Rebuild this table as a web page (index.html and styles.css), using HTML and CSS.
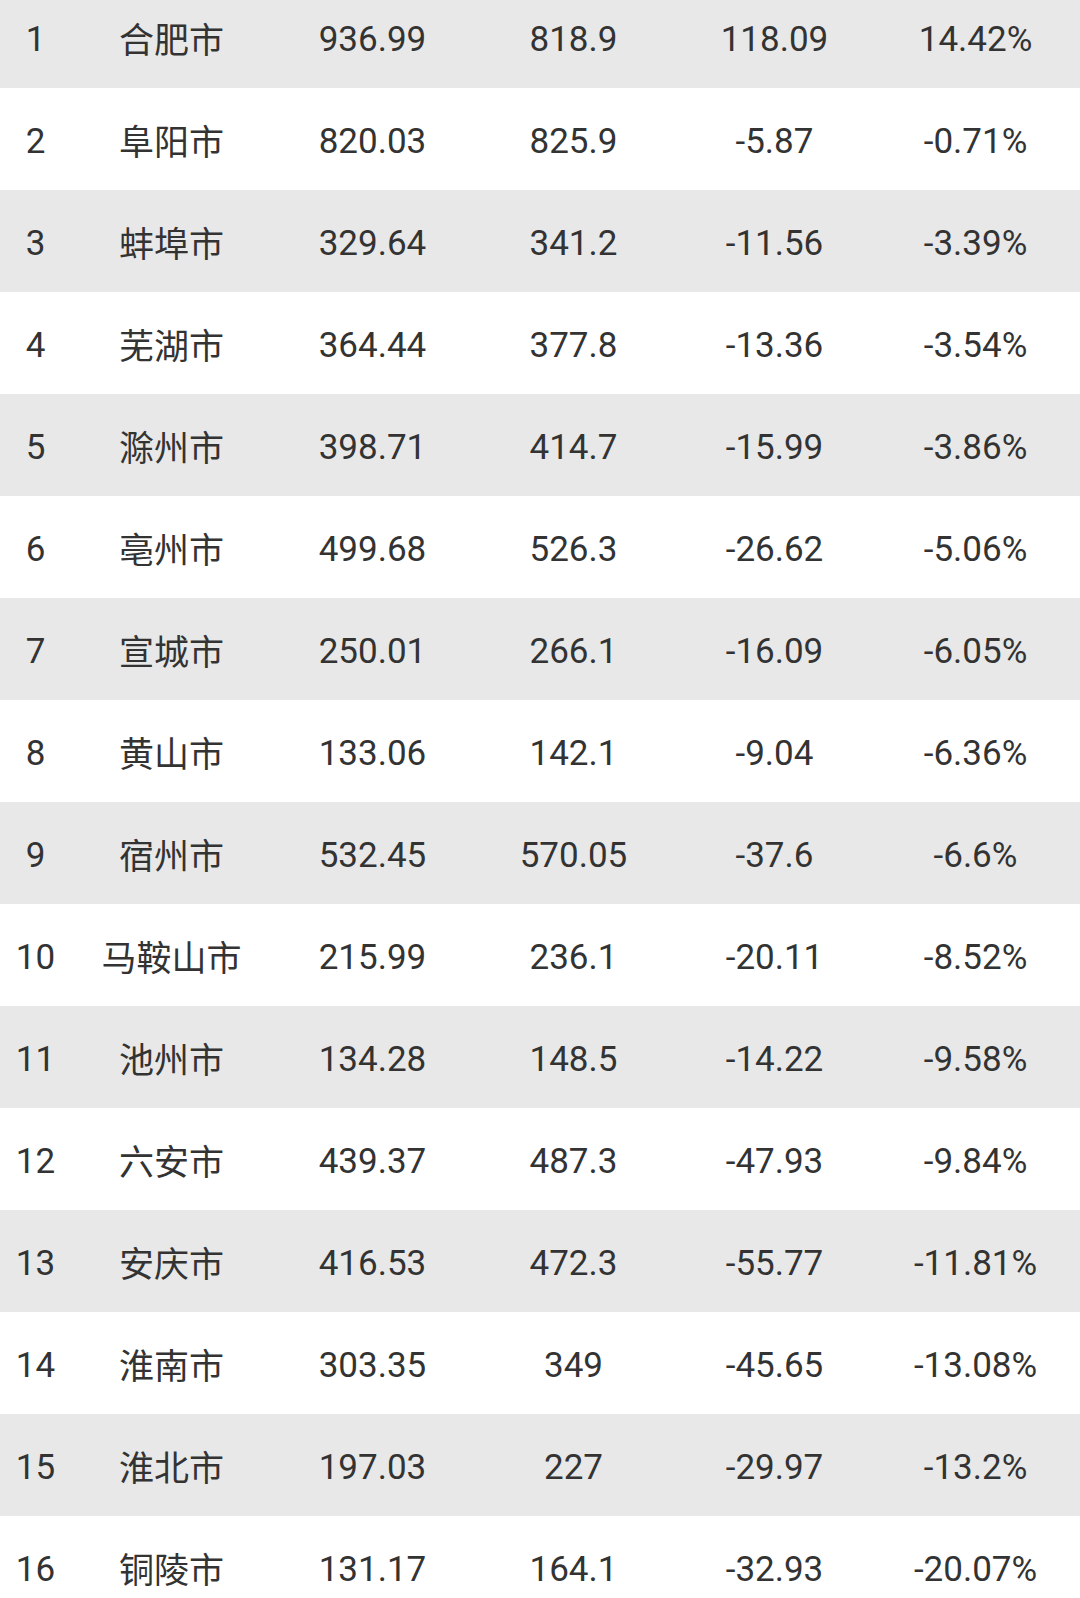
FILE: index.html
```html
<!DOCTYPE html>
<html lang="zh-CN">
<head>
<meta charset="utf-8">
<title>安徽各市数据</title>
<link rel="stylesheet" href="styles.css">
</head>
<body>
<div class="table">
  <div class="row alt"><div class="c">1</div><div class="c cn">合肥市</div><div class="c">936.99</div><div class="c">818.9</div><div class="c">118.09</div><div class="c">14.42%</div></div>
  <div class="row"><div class="c">2</div><div class="c cn">阜阳市</div><div class="c">820.03</div><div class="c">825.9</div><div class="c">-5.87</div><div class="c">-0.71%</div></div>
  <div class="row alt"><div class="c">3</div><div class="c cn">蚌埠市</div><div class="c">329.64</div><div class="c">341.2</div><div class="c">-11.56</div><div class="c">-3.39%</div></div>
  <div class="row"><div class="c">4</div><div class="c cn">芜湖市</div><div class="c">364.44</div><div class="c">377.8</div><div class="c">-13.36</div><div class="c">-3.54%</div></div>
  <div class="row alt"><div class="c">5</div><div class="c cn">滁州市</div><div class="c">398.71</div><div class="c">414.7</div><div class="c">-15.99</div><div class="c">-3.86%</div></div>
  <div class="row"><div class="c">6</div><div class="c cn">亳州市</div><div class="c">499.68</div><div class="c">526.3</div><div class="c">-26.62</div><div class="c">-5.06%</div></div>
  <div class="row alt"><div class="c">7</div><div class="c cn">宣城市</div><div class="c">250.01</div><div class="c">266.1</div><div class="c">-16.09</div><div class="c">-6.05%</div></div>
  <div class="row"><div class="c">8</div><div class="c cn">黄山市</div><div class="c">133.06</div><div class="c">142.1</div><div class="c">-9.04</div><div class="c">-6.36%</div></div>
  <div class="row alt"><div class="c">9</div><div class="c cn">宿州市</div><div class="c">532.45</div><div class="c">570.05</div><div class="c">-37.6</div><div class="c">-6.6%</div></div>
  <div class="row"><div class="c">10</div><div class="c cn">马鞍山市</div><div class="c">215.99</div><div class="c">236.1</div><div class="c">-20.11</div><div class="c">-8.52%</div></div>
  <div class="row alt"><div class="c">11</div><div class="c cn">池州市</div><div class="c">134.28</div><div class="c">148.5</div><div class="c">-14.22</div><div class="c">-9.58%</div></div>
  <div class="row"><div class="c">12</div><div class="c cn">六安市</div><div class="c">439.37</div><div class="c">487.3</div><div class="c">-47.93</div><div class="c">-9.84%</div></div>
  <div class="row alt"><div class="c">13</div><div class="c cn">安庆市</div><div class="c">416.53</div><div class="c">472.3</div><div class="c">-55.77</div><div class="c">-11.81%</div></div>
  <div class="row"><div class="c">14</div><div class="c cn">淮南市</div><div class="c">303.35</div><div class="c">349</div><div class="c">-45.65</div><div class="c">-13.08%</div></div>
  <div class="row alt"><div class="c">15</div><div class="c cn">淮北市</div><div class="c">197.03</div><div class="c">227</div><div class="c">-29.97</div><div class="c">-13.2%</div></div>
  <div class="row"><div class="c">16</div><div class="c cn">铜陵市</div><div class="c">131.17</div><div class="c">164.1</div><div class="c">-32.93</div><div class="c">-20.07%</div></div>
</div>
</body>
</html>
```
FILE: styles.css
```css
html, body {
  margin: 0;
  padding: 0;
  background: #ffffff;
}
body {
  width: 1080px;
  height: 1598px;
  overflow: hidden;
  font-family: Roboto, "Noto Sans CJK SC", sans-serif;
  color: #333333;
}
.table {
  margin-top: -14px;
  display: flex;
  flex-direction: column;
}
.row {
  display: grid;
  grid-template-columns: 71px repeat(5, 201px) 1fr;
  height: 102px;
  align-items: center;
  background: #ffffff;
}
.row.alt {
  background: #e8e8e8;
}
.c {
  text-align: center;
  font-size: 35px;
  line-height: 40px;
  padding-top: 6px;
  white-space: nowrap;
}
.cn {
  font-family: "Noto Sans CJK SC", sans-serif;
  padding-top: 1px;
}
```
